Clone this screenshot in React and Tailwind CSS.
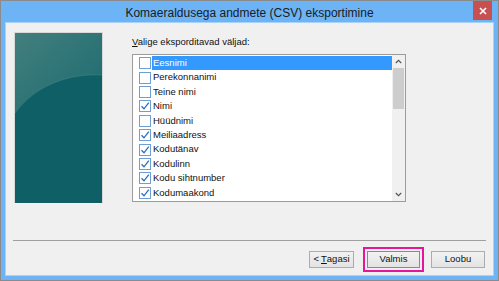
import React from 'react';

const fields = [
  { name: 'Eesnimi', checked: false, selected: true },
  { name: 'Perekonnanimi', checked: false },
  { name: 'Teine nimi', checked: false },
  { name: 'Nimi', checked: true },
  { name: 'Hüüdnimi', checked: false },
  { name: 'Meiliaadress', checked: true },
  { name: 'Kodutänav', checked: true },
  { name: 'Kodulinn', checked: true },
  { name: 'Kodu sihtnumber', checked: true },
  { name: 'Kodumaakond', checked: true },
];

function CheckBox({ checked }) {
  return (
    <div className="w-[12px] h-[12px] border border-[#6f9fd0] bg-white shrink-0 flex items-center justify-center">
      {checked && (
        <svg width="10" height="10" viewBox="0 0 10 10">
          <path d="M1.5 5.2 L4 7.8 L8.8 1.6" fill="none" stroke="#2a6fc4" strokeWidth="1.3" />
        </svg>
      )}
    </div>
  );
}

function Banner() {
  return (
    <div className="w-[89px] h-[172px] border border-[#d8d8d8] border-b-[#f6f6f6] bg-[#0f5f67] shrink-0 overflow-hidden">
      <svg width="87" height="170" viewBox="0 0 87 170" className="block">
        <defs>
          <linearGradient id="bn" x1="0" y1="0" x2="1" y2="1">
            <stop offset="0" stopColor="#437f7d" />
            <stop offset="1" stopColor="#1b6a70" />
          </linearGradient>
        </defs>
        <rect width="87" height="170" fill="#0f5f67" />
        <path d="M0 0 H87 V42 C55 40 20 52 0 80 Z" fill="url(#bn)" />
        <path d="M0 80 C20 52 55 40 87 42" fill="none" stroke="#3d7c7c" strokeWidth="0.8" />
      </svg>
    </div>
  );
}

function Button({ children, def }) {
  return (
    <div
      className={
        'h-[17px] flex items-center justify-center bg-gradient-to-b from-[#f2f2f2] to-[#e3e3e3] text-[9.5px] text-[#111] ' +
        (def ? 'border border-[#4a9ae0]' : 'border border-[#acacac]')
      }
    >
      {children}
    </div>
  );
}

export default function App() {
  return (
    <div className="w-[499px] h-[281px] border border-[#8b8b8b] bg-[#6cb4f6] flex flex-col font-['Liberation_Sans',Arial,sans-serif] overflow-hidden">
      {/* title bar */}
      <div className="h-[21px] shrink-0 relative flex items-center justify-center">
        <span className="text-[12px] text-[#1b1b1b] pt-[2px]">Komaeraldusega andmete (CSV) eksportimine</span>
        <div className="absolute right-[6px] top-0 w-[19px] h-[19px] bg-[#c75050] flex items-center justify-center">
          <svg width="8" height="8" viewBox="0 0 8 8">
            <path d="M1 1 L7 7 M7 1 L1 7" stroke="white" strokeWidth="1.6" />
          </svg>
        </div>
      </div>

      {/* client area */}
      <div className="flex-1 mx-[4px] mb-[4px] border border-[#a8d2fa] bg-[#f0f0f0] flex flex-col min-h-0">
        <div className="flex pl-[8px] pt-[9px]">
          <Banner />
          <div className="ml-[29px] flex flex-col">
            <div className="text-[9.5px] text-[#111] h-[22px] pt-[5px] leading-none">
              <span className="underline">V</span>alige eksporditavad väljad:
            </div>
            <div className="w-[274px] h-[148px] border border-[#9c9c9c] bg-white flex">
              <div className="flex-1 pt-[1px] flex flex-col">
                {fields.map((f) => (
                  <div key={f.name} className="h-[14.4px] flex items-center pl-[6px]">
                    <CheckBox checked={f.checked} />
                    <span
                      className={
                        'ml-[1px] pl-[1px] h-full flex-1 flex items-center text-[9.5px] ' +
                        (f.selected ? 'bg-[#3399ff] text-white' : 'text-[#111]')
                      }
                    >
                      {f.name}
                    </span>
                  </div>
                ))}
              </div>
              <div className="w-[13px] bg-[#f0f0f0] flex flex-col items-center">
                <div className="h-[13px] flex items-center justify-center">
                  <svg width="7" height="5" viewBox="0 0 7 5">
                    <path d="M0.8 4 L3.5 1.3 L6.2 4" fill="none" stroke="#555" strokeWidth="1.2" />
                  </svg>
                </div>
                <div className="w-[11px] h-[41px] bg-[#cdcdcd]" />
                <div className="flex-1" />
                <div className="h-[13px] flex items-center justify-center">
                  <svg width="7" height="5" viewBox="0 0 7 5">
                    <path d="M0.8 1 L3.5 3.7 L6.2 1" fill="none" stroke="#555" strokeWidth="1.2" />
                  </svg>
                </div>
              </div>
            </div>
          </div>
        </div>

        <div className="mx-[7px] mt-[36px] h-px bg-[#a0a0a0]" />

        <div className="flex items-center justify-end pr-[8px] mt-[6px]">
          <div className="w-[45px]">
            <Button>
              &lt; <span className="underline ml-[2px]">T</span>agasi
            </Button>
          </div>
          <div className="ml-[9px] w-[61px] h-[25px] border-2 border-[#e5169b] p-[2px] flex items-center">
            <div className="w-full">
              <Button def>Valmis</Button>
            </div>
          </div>
          <div className="ml-[7px] w-[54px]">
            <Button>Loobu</Button>
          </div>
        </div>
      </div>
    </div>
  );
}
